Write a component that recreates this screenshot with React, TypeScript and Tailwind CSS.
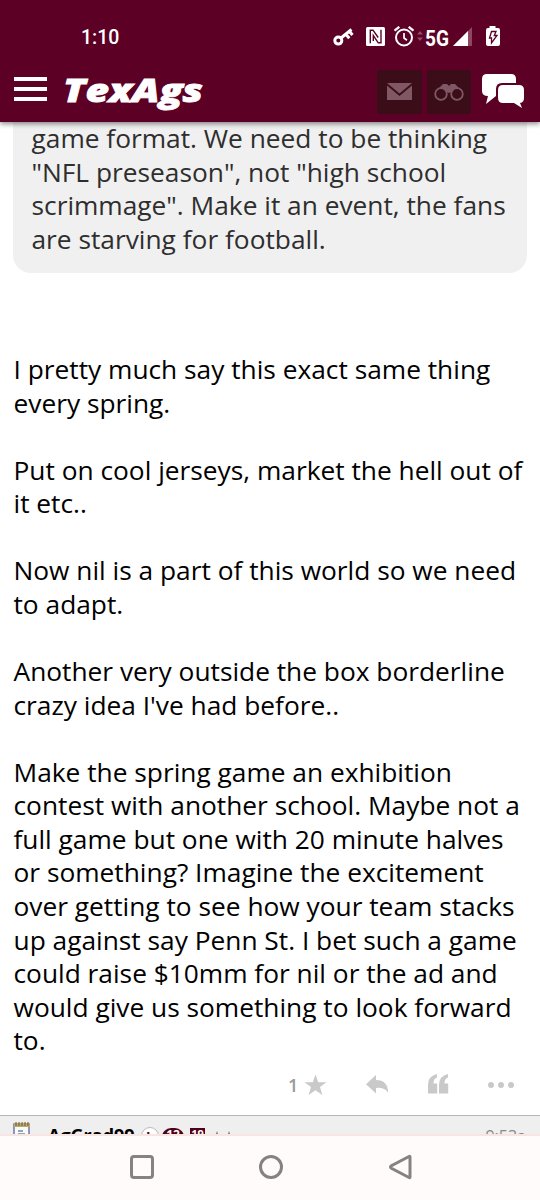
const paragraphs = [
  ['I pretty much say this exact same thing', 'every spring.'],
  ['Put on cool jerseys, market the hell out of', 'it etc..'],
  ['Now nil is a part of this world so we need', 'to adapt.'],
  ['Another very outside the box borderline', "crazy idea I've had before.."],
  [
    'Make the spring game an exhibition',
    'contest with another school. Maybe not a',
    'full game but one with 20 minute halves',
    'or something? Imagine the excitement',
    'over getting to see how your team stacks',
    'up against say Penn St. I bet such a game',
    'could raise $10mm for nil or the ad and',
    'would give us something to look forward',
    'to.',
  ],
];

const quoteLines = [
  'game format. We need to be thinking',
  '"NFL preseason", not "high school',
  'scrimmage". Make it an event, the fans',
  'are starving for football.',
];

const StatusBar = () => (
  <div className="flex h-[62px] items-start justify-between pt-[26px] pl-[81px] pr-[38px] text-white">
    <span className="font-['Roboto'] text-[19.5px] leading-[23px] font-medium">1:10</span>
    <svg className="h-[24px] w-[170px]" viewBox="0 0 170 24" fill="none">
      {/* VPN key */}
      <circle cx="6.3" cy="14.6" r="3.5" stroke="white" strokeWidth="3" />
      <path d="M9 12 L19.5 3.5" stroke="white" strokeWidth="3" />
      <path d="M14 8.5 L17.3 12.2 M17.5 5.5 L20.5 9" stroke="white" strokeWidth="3" />
      {/* NFC */}
      <rect x="34" y="1" width="19" height="19" rx="1.5" fill="white" />
      <path d="M38.3 17.200 V4.200 H41 L46.200 11.500 M49 3.800 V16.800 H46.300 L41.300 9.500 V15" stroke="#5c0025" strokeWidth="1.4" />
      {/* Alarm */}
      <circle cx="72" cy="11.5" r="8" stroke="white" strokeWidth="2" />
      <path d="M72 7 V12 L75 14.2" stroke="white" strokeWidth="1.7" />
      <path d="M62.5 4.6 L67.3 .8 M76.7 .8 L81.5 4.6" stroke="white" strokeWidth="2.2" />
      <path d="M85 8.5 L88 5 L91 8.5 Z M85 11.5 L88 15 L91 11.5 Z" fill="#934b66" />
      <text x="93" y="20" fill="white" fontFamily="Roboto" fontSize="21.5" fontWeight="700" textLength="24" lengthAdjust="spacingAndGlyphs">5G</text>
      <path d="M140 1 V20 H121 Z" fill="#8f4661" />
      <path d="M136 5 V20 H121 Z" fill="white" />
      {/* Battery */}
      <path d="M157.500 0 H163.500 V2 H166 Q168 2 168 4 V18 Q168 20 166 20 H156 Q154 20 154 18 V4 Q154 2 156 2 H157.500 Z" fill="white" />
      <path d="M159.500 5.500 H164 L162.300 9.500 H165 L159.500 17 V12 H157.500 Z" stroke="#5c0025" strokeWidth="1.3" />
    </svg>
  </div>
);

const Header = () => (
  <header className="relative z-10 h-[122px] shrink-0 bg-[#5c0025] shadow-[0_2px_5px_rgba(0,0,0,0.45)]">
    <StatusBar />
    <div className="flex h-[60px] items-start">
      <div className="mt-[15px] ml-[14px] flex w-[33px] flex-col gap-[6px]">
        <span className="h-[4px] bg-white" />
        <span className="h-[4px] bg-white" />
        <span className="h-[4px] bg-white" />
      </div>
      <svg className="mt-[8px] ml-[15px] h-[44px] w-[150px]" viewBox="0 0 150 44">
        <text
          x="1" y="31.500"
          fill="white" stroke="white" strokeWidth=".8"
          fontFamily="Open Sans" fontSize="31" fontWeight="800" fontStyle="italic"
          textLength="140" lengthAdjust="spacingAndGlyphs"
        >TexAgs</text>
      </svg>
      <div className="mt-[8px] ml-auto flex pr-[15px]">
        <div className="flex h-[44px] w-[45px] items-center justify-center rounded-[3px] bg-[#3a0d18]">
          <svg width="25" height="18" viewBox="0 0 25 18">
            <path d="M0 0 H25 L12.500 10.500 Z" fill="#805865" />
            <path d="M0 2.500 L12.500 13 L25 2.500 V17 H0 Z" fill="#805865" />
          </svg>
        </div>
        <div className="ml-[5px] flex h-[44px] w-[44px] items-center justify-center rounded-[3px] bg-[#3a0d18]">
          <svg width="30" height="18" viewBox="0 0 30 18" fill="none" stroke="#805865">
            <path d="M3 7 L9 1 H13 L15 3 L17 1 H21 L27 7 L22 7 L15 10 L8 7 Z" fill="#805865" stroke="none" />
            <circle cx="7" cy="11" r="5.800" fill="#3a0d18" strokeWidth="1.800" />
            <circle cx="23" cy="11" r="5.800" fill="#3a0d18" strokeWidth="1.800" />
          </svg>
        </div>
        <svg className="mt-[3px] ml-[10px]" width="44" height="36" viewBox="0 0 44 36">
          <path d="M6 1 H30 Q35 1 35 6 V10 H21 Q15 10 15 16 V23 L5 31 L7 23 Q1 23 1 18 V6 Q1 1 6 1 Z" fill="white" />
          <path d="M22 12 H38 Q43 12 43 17 V25 Q43 29.500 39 30 L41 35 L33 30 H22 Q17 30 17 25 V17 Q17 12 22 12 Z" fill="white" />
        </svg>
      </div>
    </div>
  </header>
);

const PostActions = () => (
  <div className="mt-[11px] ml-[288px] flex h-[32px] w-[226px] items-center justify-between text-[#c9c9c9]">
    <div className="flex items-center">
      <span className="w-[15px] font-['Open_Sans'] text-[18px] leading-none font-semibold text-[#999]">1</span>
      <svg className="ml-[1px]" width="23" height="22" viewBox="0 0 23 22" fill="currentColor">
        <path d="M11.500 .500 L14.200 8.200 H22.500 L16 13 L18.400 21 L11.500 16.200 L4.600 21 L7 13 L.5 8.200 H8.800 Z" />
      </svg>
    </div>
    <svg width="23" height="20" viewBox="0 0 23 20" fill="currentColor">
      <path d="M10 0 V5 Q22 5 22 17.500 Q18 12 10 13 V18.500 L0 9.200 Z" />
    </svg>
    <svg className="-mt-[2px]" width="21" height="20" viewBox="0 0 21 20" fill="currentColor">
      <path d="M9 0 V3.500 Q5.500 4.500 5.500 9.500 H9.200 V19.500 H0 V11 Q0 2 9 0 Z M20 0 V3.500 Q16.500 4.500 16.500 9.500 H20.200 V19.500 H11 V11 Q11 2 20 0 Z" />
    </svg>
    <div className="flex gap-[4px]">
      <span className="size-[6px] rounded-full bg-current" />
      <span className="size-[6px] rounded-full bg-current" />
      <span className="size-[6px] rounded-full bg-current" />
    </div>
  </div>
);

const NextPost = () => (
  <div className="flex h-[19px] shrink-0 items-start overflow-hidden border-t border-[#b5b5b5] bg-[#efefef] pl-[13px] pr-[14px]">
    <svg className="mt-[6px] shrink-0" width="18" height="20" viewBox="0 0 18 20">
      <rect x="1" y="2" width="15" height="18" fill="#fafafa" stroke="#7373ae" strokeWidth="1.500" />
      <path d="M1 3 H17" stroke="#bda96c" strokeWidth="4" />
      <path d="M3 0 V4 M6 0 V4 M9 0 V4 M12 0 V4 M15 0 V4" stroke="#65583c" strokeWidth="1" />
      <path d="M5 9 H10 M5 12 H12" stroke="#6b8d9c" strokeWidth="1.500" />
    </svg>
    <span className="mt-[8px] ml-[17px] w-[86px] shrink-0 font-['Open_Sans'] text-[18px] leading-[22px] font-bold text-black">AgGrad99</span>
    <span className="mt-[11px] ml-[7px] flex size-[18px] shrink-0 justify-center rounded-full border border-[#bbb] bg-white text-[14px] leading-[18px] font-bold text-[#4b1020]">L</span>
    <span className="mt-[12px] ml-[3px] h-[18px] w-[22px] shrink-0 rounded-full bg-[#500018] text-center font-['Open_Sans'] text-[12px] leading-[14px] font-bold text-white">12</span>
    <span className="mt-[12px] ml-[6px] h-[18px] w-[15px] shrink-0 bg-[#500018] text-center font-['Open_Sans'] text-[11px] leading-[12px] font-bold text-white">19</span>
    <svg className="mt-[15px] ml-[8px] shrink-0" width="20" height="10" viewBox="0 0 20 10" fill="#777">
      <path d="M4 0 L6 6 H2 Z M16 0 L18 6 H14 Z" />
    </svg>
    <span className="mt-[9px] ml-auto font-['Open_Sans'] text-[16px] leading-[22px] text-[#888]">9:53a</span>
  </div>
);

const NavBar = () => (
  <nav className="h-[66px] shrink-0 border-t-2 border-[#f8e4e1] bg-[#fffbfa]">
    <svg width="540" height="64" viewBox="0 0 540 64" fill="none" stroke="#858382" strokeWidth="3">
      <rect x="131.500" y="20.500" width="21" height="21" rx="2.500" />
      <circle cx="271" cy="31" r="10.500" />
      <path d="M410 21 V41 Q410 42 409 41.500 L391 32 Q390 31 391 30 L409 20.500 Q410 20 410 21 Z" />
    </svg>
  </nav>
);

const App = () => {
  return (
    <div className="flex h-[1200px] w-[540px] flex-col overflow-hidden bg-white">
      <Header />
      <main className="h-[993px] shrink-0 overflow-hidden font-['Open_Sans'] text-[26.3px] leading-[33.57px] whitespace-nowrap text-black">
        <blockquote className="mx-[13px] h-[151px] rounded-b-[18px] bg-[#f0f0f0] pl-[18.500px] text-[#2e2e2e]">
          {quoteLines.map((line) => (
            <p key={line}>{line}</p>
          ))}
        </blockquote>
        <article className="mt-[80px] ml-[13.5px] space-y-[33.57px]">
          {paragraphs.map((lines) => (
            <div key={lines[0]}>
              {lines.map((line) => (
                <p key={line}>{line}</p>
              ))}
            </div>
          ))}
        </article>
        <PostActions />
      </main>
      <NextPost />
      <NavBar />
    </div>
  );
};

export default App;
